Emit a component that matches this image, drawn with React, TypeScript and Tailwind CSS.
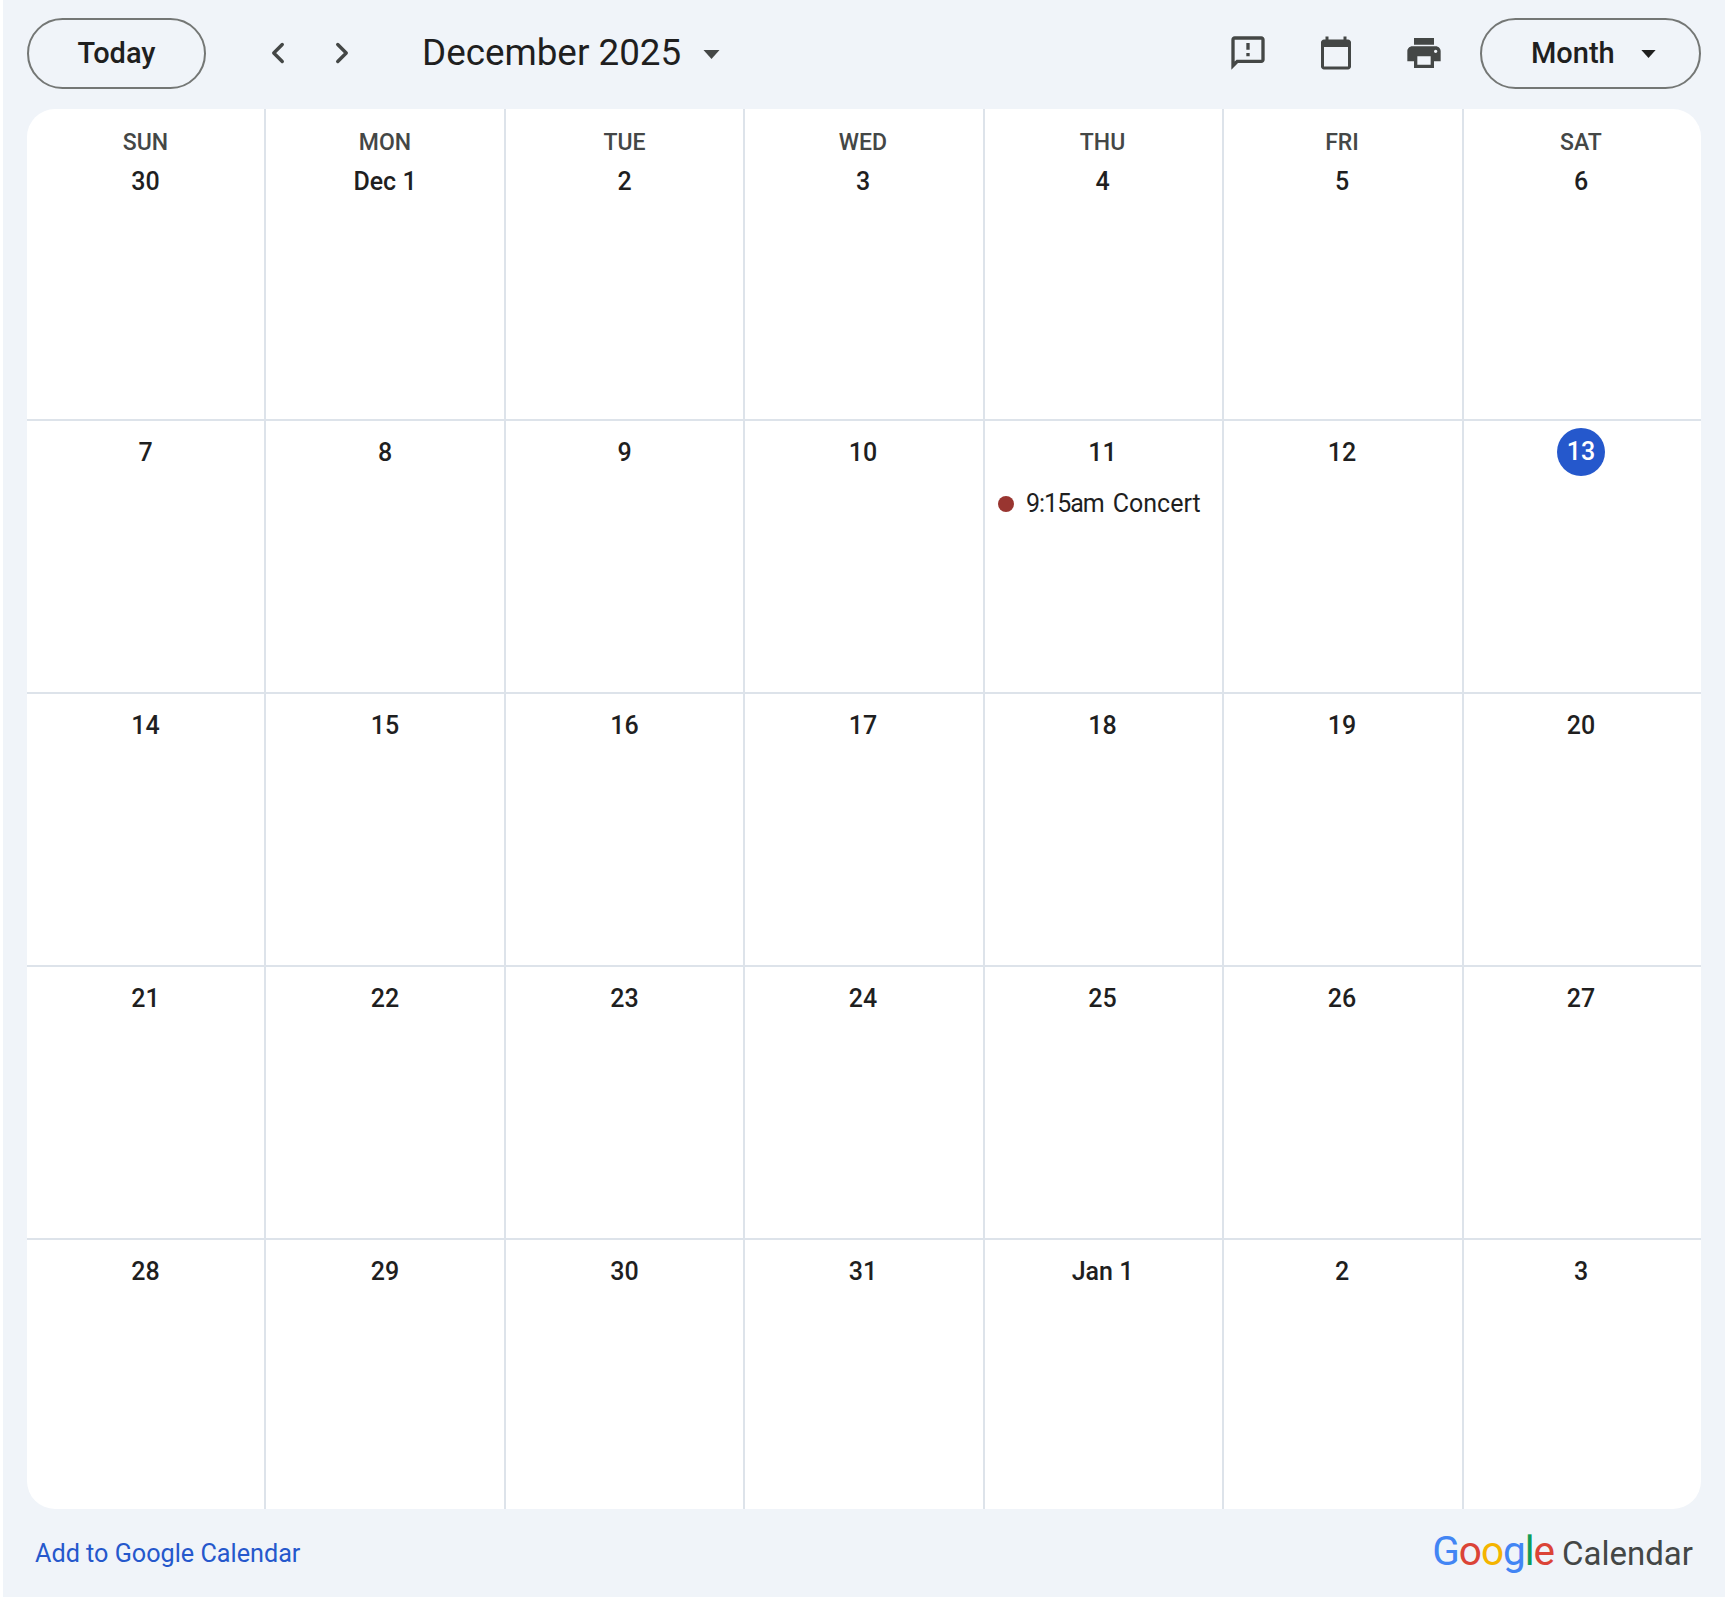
import { ChevronLeft, ChevronRight } from 'lucide-react'

const weekdays = ['SUN', 'MON', 'TUE', 'WED', 'THU', 'FRI', 'SAT']

const weeks = [
  ['30', 'Dec 1', '2', '3', '4', '5', '6'],
  ['7', '8', '9', '10', '11', '12', '13'],
  ['14', '15', '16', '17', '18', '19', '20'],
  ['21', '22', '23', '24', '25', '26', '27'],
  ['28', '29', '30', '31', 'Jan 1', '2', '3'],
]

function Caret({ className }: { className: string }) {
  return (
    <svg viewBox="0 0 16 9" className={className} fill="currentColor">
      <path d="M0 0h16l-8 9z" />
    </svg>
  )
}

function IconSlot({ size, d }: { size: string; d: string }) {
  return (
    <div className="flex w-[88px] items-center justify-center">
      <svg viewBox="0 0 24 24" className={size} fill="#444746">
        <path d={d} />
      </svg>
    </div>
  )
}

function Header() {
  return (
    <div className="flex h-[109px] items-center pb-[3px] pl-[24px] pr-[24px]">
      <button className="flex h-[71px] w-[179px] items-center justify-center rounded-full border-2 border-[#747775] pt-[1px] text-[29px] font-medium text-[#1f1f1f]">
        Today
      </button>
      <div className="ml-[40px] flex items-center">
        <div className="flex w-[63px] items-center justify-center">
          <ChevronLeft className="size-[34px] text-[#444746]" strokeWidth={2.4} />
        </div>
        <div className="flex w-[65px] items-center justify-center">
          <ChevronRight className="size-[34px] text-[#444746]" strokeWidth={2.4} />
        </div>
      </div>
      <div className="ml-[48px] text-[36.8px] leading-none text-[#1f1f1f]">December 2025</div>
      <Caret className="ml-[22px] mt-[2px] h-[9px] w-[17px] text-[#444746]" />
      <div className="ml-auto flex items-center">
        <IconSlot
          size="size-[40px]"
          d="M20 2H4c-1.1 0-1.99.9-1.99 2L2 22l4-4h14c1.1 0 2-.9 2-2V4c0-1.1-.9-2-2-2zm0 14H5.17L4 17.17V4h16v12zM11 12h2v2h-2zm0-6h2v4h-2z"
        />
        <IconSlot
          size="size-[36px]"
          d="M20 3h-1V1h-2v2H7V1H5v2H4c-1.1 0-2 .9-2 2v16c0 1.1.9 2 2 2h16c1.1 0 2-.9 2-2V5c0-1.1-.9-2-2-2zm0 18H4V8h16v13z"
        />
        <IconSlot
          size="size-[40px]"
          d="M19 8H5c-1.66 0-3 1.34-3 3v6h4v4h12v-4h4v-6c0-1.66-1.34-3-3-3zm-3 11H8v-5h8v5zm3-7c-.55 0-1-.45-1-1s.45-1 1-1 1 .45 1 1-.45 1-1 1zm-1-9H6v4h12V3z"
        />
      </div>
      <button className="ml-[12px] flex h-[71px] w-[221px] items-center rounded-full border-2 border-[#747775] pl-[49px] pt-[1px] text-[29px] font-medium text-[#1f1f1f]">
        Month
        <Caret className="ml-[26px] mt-[1px] h-[8px] w-[15px] text-[#1f1f1f]" />
      </button>
    </div>
  )
}

function DayCell({ label, week, col }: { label: string; week: number; col: number }) {
  const isToday = week === 1 && col === 6
  const hasEvent = week === 1 && col === 4
  return (
    <div
      className={`flex min-w-0 flex-col items-center ${col < 6 ? 'border-r-2 border-[#dde3ea]' : 'pr-[3px]'} ${col >= 3 && col < 6 ? 'pr-[2px]' : ''} ${week < 4 ? 'border-b-2 border-[#dde3ea]' : ''}`}
    >
      {week === 0 && (
        <div className="mt-[18px] h-[32px] text-[23px] leading-[32px] font-medium text-[#444746]">
          {weekdays[col]}
        </div>
      )}
      <div
        className={`flex items-center justify-center rounded-full text-[25px] font-medium ${week === 0 ? 'mt-[7px] h-[32px]' : isToday ? 'mt-[7px] h-[48px]' : 'mt-[8px] h-[48px]'} ${isToday ? 'w-[48px] bg-[#2558cc] text-white' : 'text-[#1f1f1f]'}`}
      >
        {label}
      </div>
      {hasEvent && (
        <div className="mt-[8px] flex h-[38px] w-full items-center pl-[13px] text-[25px] whitespace-nowrap text-[#1f1f1f]">
          <span className="size-[16px] shrink-0 rounded-full bg-[#993530]" />
          <span className="ml-[12px] tracking-[-1px]">9:15am</span>
          <span className="ml-[9px]">Concert</span>
        </div>
      )}
    </div>
  )
}

function Footer() {
  return (
    <div className="flex h-[88px] items-center justify-between pl-[32px] pr-[32px]">
      <a className="pt-[2px] text-[25.2px] text-[#2558cc]">Add to Google Calendar</a>
      <div className="flex items-baseline pb-[4px] leading-none">
        <span className="text-[40.5px] tracking-[-1px]">
          <span className="text-[#4285f4]">G</span>
          <span className="text-[#db4437]">o</span>
          <span className="text-[#f4b400]">o</span>
          <span className="text-[#4285f4]">g</span>
          <span className="text-[#0f9d58]">l</span>
          <span className="text-[#db4437]">e</span>
        </span>
        <span className="ml-[8px] text-[33px] text-[#444746]">Calendar</span>
      </div>
    </div>
  )
}

export default function App() {
  return (
    <div className="h-[1600px] w-[1726px] bg-white pl-[3px] pr-[1px] pb-[3px] font-['Roboto',sans-serif]">
      <div className="h-full bg-[#f0f4f9]">
        <Header />
        <div className="mx-[24px] grid h-[1400px] grid-cols-[239px_240px_239px_240px_239px_240px_237px] grid-rows-[312px_273px_273px_273px_269px] overflow-hidden rounded-[28px] bg-white">
          {weeks.map((days, week) =>
            days.map((label, col) => <DayCell key={`${week}-${col}`} label={label} week={week} col={col} />),
          )}
        </div>
        <Footer />
      </div>
    </div>
  )
}
